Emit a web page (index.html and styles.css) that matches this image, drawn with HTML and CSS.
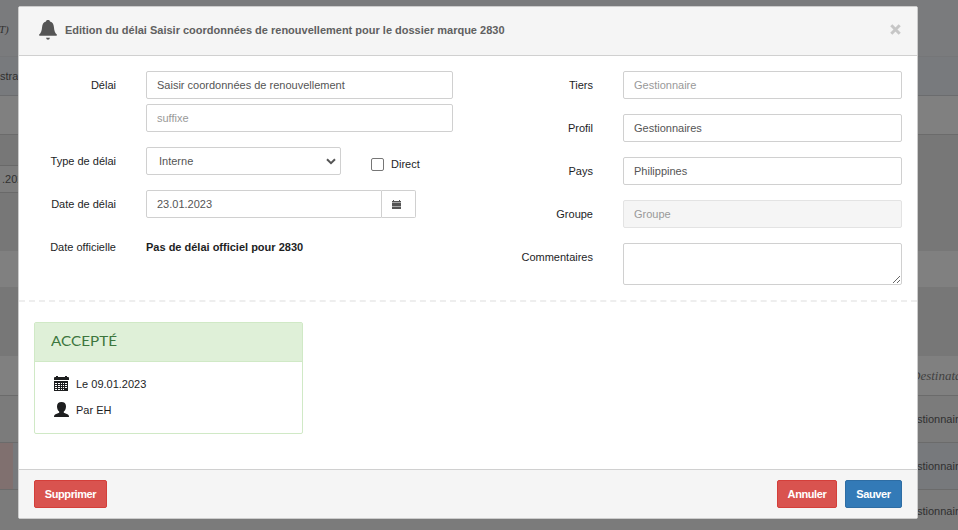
FILE: index.html
```html
<!DOCTYPE html>
<html lang="fr">
<head>
<meta charset="utf-8">
<title>Edition du délai</title>
<link rel="stylesheet" href="styles.css">
</head>
<body>
<div class="page">
  <div class="strip strip-top"><i class="logo-text">OT)</i></div>
  <div class="strip strip-nav"><span>strat</span></div>
  <div class="strip strip-head"></div>
  <div class="strip strip-gap"></div>
  <div class="strip strip-field"><span class="page-date">.2023</span></div>
  <div class="strip strip-space"></div>
  <div class="strip strip-light"></div>
  <div class="strip strip-dark"></div>
  <div class="strip strip-title"><i class="column-name">Destinataire</i></div>
  <div class="strip strip-row"><span class="recipient">stionnaires</span></div>
  <div class="strip strip-row strip-blue"><b class="flag"></b><span class="recipient">stionnaires</span></div>
  <div class="strip strip-row strip-last"><span class="recipient">stionnaires</span></div>
</div>
<div class="overlay">
<form class="modal">
  <header class="modal-header">
    <svg class="bell" viewBox="0 0 18 20"><path d="M9 0c1 0 1.800.5 2 1.400C13.700 2.200 14.700 4.200 14.900 7c.3 4 1 5.800 2.900 7.400.4.500.1 1.300-.6 1.300H.8c-.7 0-1-.8-.6-1.300C2.100 12.800 2.800 11 3.100 7c.2-2.800 1.200-4.800 3.900-5.600C7.200.5 8 0 9 0zM7 17.800h4q-.5 2-2 2t-2-2z"/></svg>
    <h1>Edition du délai Saisir coordonnées de renouvellement pour le dossier marque 2830</h1>
    <svg class="close" viewBox="0 0 11 11"><path d="M1.300 1.300l8.400 8.400M9.700 1.300L1.300 9.700"/></svg>
  </header>
  <div class="modal-body">
    <div class="fields">
      <div class="column column-left">
        <label>Délai</label>
        <div class="stack">
          <input class="control" value="Saisir coordonnées de renouvellement">
          <input class="control" placeholder="suffixe">
        </div>
        <label>Type de délai</label>
        <div class="line">
          <div class="control select">Interne<svg viewBox="0 0 10 7"><path d="M1 1.300l4 3.900 4-3.900"/></svg></div>
          <div class="direct"><span class="box"></span>Direct</div>
        </div>
        <label>Date de délai</label>
        <div class="date-group">
          <input class="control" value="23.01.2023">
          <div class="date-button"><svg viewBox="0 0 9 9"><path d="M0 1h1V0h1v1h5V0h1v1h1v1.500H0zM0 3h9v3H0zM0 6.400h9V9H0z"/></svg></div>
        </div>
        <label>Date officielle</label>
        <div class="official">Pas de délai officiel pour 2830</div>
      </div>
      <div class="column column-right">
        <label>Tiers</label><input class="control" placeholder="Gestionnaire">
        <label>Profil</label><input class="control" value="Gestionnaires">
        <label>Pays</label><input class="control" value="Philippines">
        <label>Groupe</label><input class="control" placeholder="Groupe" disabled>
        <label>Commentaires</label><textarea class="control"></textarea>
      </div>
    </div>
    <hr>
    <section class="status">
      <h2><span>ACCEPTÉ</span></h2>
      <div class="status-body">
        <div class="status-line"><svg viewBox="0 0 15 15"><path fill-rule="evenodd" d="M0 1.500L1 1h1V0h2v1h7V0h2v1h1l1 .5V4H0zM0 5h14v10H0zM1 7v1h2V7zm3 0v1h2V7zm3 0v1h1V7zm2 0v1h1V7zm2 0v1h2V7zM1 9v1h2V9zm3 0v1h2V9zm3 0v1h1V9zm2 0v1h1V9zm2 0v1h2V9zM1 11v1h2v-1zm3 0v1h2v-1zm3 0v1h1v-1zm2 0v1h1v-1zm2 0v1h2v-1zM1 13v1h2v-1zm3 0v1h2v-1zm3 0v1h1v-1zm2 0v1h1v-1z"/></svg>Le 09.01.2023</div>
        <div class="status-line"><svg viewBox="0 0 15 15"><path d="M7.500 0C10.300 0 12 1.500 12 4.300c0 2.400-.9 4.300-2.200 5.300v1.200l3.700 1.500c1 .4 1.500 1.200 1.500 2.700H0c0-1.500.5-2.300 1.500-2.700l3.700-1.500V9.600C3.900 8.600 3 6.700 3 4.300 3 1.500 4.700 0 7.500 0z"/></svg>Par EH</div>
      </div>
    </section>
  </div>
  <footer class="modal-footer">
    <button type="button" class="btn danger delete">Supprimer</button>
    <button type="button" class="btn danger cancel">Annuler</button>
    <button type="button" class="btn primary">Sauver</button>
  </footer>
</form>
</div>
</body>
</html>
```
FILE: styles.css
```css
* { box-sizing: border-box; }
body {
  margin: 0;
  height: 530px;
  overflow: hidden;
  font: 11px/18px "Liberation Sans", Arial, sans-serif;
  color: #1d1e1f;
}
.page { display: flex; flex-direction: column; height: 530px; background: #777; overflow: hidden; }
.strip { display: flex; align-items: center; flex: none; overflow: hidden; white-space: nowrap; color: #303030; }
.strip-top { height: 57px; background: #7a7b7d; border-bottom: 1px solid #757678; }
.strip-nav { height: 39px; background: #787a7d; border-bottom: 1px solid #6b6c6e; }
.strip-head { height: 39px; background: #808080; border-bottom: 1px solid #6b6b6b; }
.strip-gap { height: 30px; }
.strip-field { height: 28px; width: 100px; background: #7d7d7d; border: solid #696969; border-width: 1px 0; }
.strip-space { height: 58px; }
.strip-light { height: 36px; background: #808080; }
.strip-dark { height: 69px; }
.strip-title { height: 40px; background: #808080; border-bottom: 1px solid #6b6b6b; }
.strip-row { height: 47px; background: #7b7b7b; border-bottom: 1px solid #6b6b6b; }
.strip-blue { background: #77797c; }
.strip-last { height: 41px; border: 0; }
.logo-text { font: italic 11px "Liberation Serif", serif; margin-left: -9px; padding-top: 2px; }
.page-date { margin-left: 2px; }
.column-name { margin-left: 911px; font: italic 13px "Liberation Serif", serif; color: #414141; }
.recipient { margin-left: auto; width: 41px; }
.flag { width: 13px; height: 46px; background: #80706f; }

.overlay { position: absolute; left: 0; top: 0; width: 958px; height: 530px; padding: 6px 0 0 18px; }
.modal {
  display: flex;
  flex-direction: column;
  width: 900px;
  height: 513px;
  background: #fff;
  border: 1px solid #ccc;
  border-radius: 2px;
}
.modal-header {
  display: flex;
  align-items: center;
  height: 49px;
  padding: 0 15px 2px 20px;
  background: #f5f5f5;
  border-bottom: 1px solid #d0d0d0;
}
.bell { width: 18px; height: 20px; fill: #555; margin-right: 8px; }
h1 { margin: 0; font-size: 11px; line-height: 18px; font-weight: bold; color: #606060; white-space: nowrap; }
.close { width: 11px; height: 11px; margin: 0 1px 1px auto; fill: none; stroke: #c6c6c6; stroke-width: 3; }
.modal-body { flex: 1; padding-top: 15px; }
.fields { display: flex; justify-content: space-between; padding: 0 15px; height: 229px; }
.column { display: grid; align-content: start; column-gap: 30px; row-gap: 15px; }
.column-left { grid-template-columns: 82px 307px; }
.column-right { grid-template-columns: 90px 279px; }
label { text-align: right; line-height: 28px; height: 28px; white-space: nowrap; }
.control {
  display: block;
  width: 100%;
  height: 28px;
  padding: 0 10px;
  border: 1px solid #d0d0d0;
  border-radius: 2px;
  background: #fff;
  color: #555;
  font: 11px "Liberation Sans", Arial, sans-serif;
}
.control::placeholder { color: #999; }
.control:disabled { background: #f5f5f5; border-color: #e3e3e3; }
textarea.control { height: 42px; resize: vertical; }
.stack { display: grid; row-gap: 5px; }
.line { display: flex; }
.select { display: flex; align-items: center; justify-content: space-between; width: 195px; padding: 0 4px 0 12px; }
.select svg { width: 10px; height: 7px; fill: none; stroke: #555; stroke-width: 2; }
.direct { display: flex; align-items: center; margin-left: 30px; padding-top: 6px; }
.box { width: 13px; height: 13px; margin-right: 7px; border: 1px solid #767676; border-radius: 2px; }
.date-group { display: flex; width: 270px; }
.date-group .control { width: 236px; border-radius: 2px 0 0 2px; }
.date-button { flex: 1; display: flex; align-items: center; padding-left: 10px; border: 1px solid #d0d0d0; border-left: 0; border-radius: 0 2px 2px 0; }
.date-button svg { width: 9px; height: 9px; fill: #555; }
.official { font-weight: bold; line-height: 28px; }
hr { margin: 0 0 20px; border: 0; border-top: 2px dashed #eee; }
.status { width: 269px; height: 112px; margin-left: 15px; border: 1px solid #d0e9c6; border-radius: 2px; }
h2 {
  height: 39px;
  margin: 0;
  padding-left: 16px;
  background: #dff0d8;
  border-bottom: 1px solid #d0e9c6;
  color: #3c763d;
  font: 400 12.5px/37px Lato, sans-serif;
}
h2 span { display: inline-block; transform: scaleX(1.22); transform-origin: left; }
.status-body { padding: 9px 19px; }
.status-line { display: flex; align-items: center; height: 26px; }
.status-line svg { width: 15px; height: 15px; margin: 0 7px 2px 0; fill: #1d1e1f; }
.modal-footer {
  display: flex;
  height: 49px;
  padding: 10px 15px 0;
  background: #f5f5f5;
  border-top: 1px solid #d0d0d0;
}
.btn { height: 28px; padding: 0; border: 1px solid; border-radius: 2px; color: #fff; font: bold 11px "Liberation Sans", Arial, sans-serif; letter-spacing: -0.4px; }
.danger { background: #d9534f; border-color: #d43f3a; }
.primary { width: 57px; background: #337ab7; border-color: #2e6da4; }
.delete { width: 73px; }
.cancel { width: 60px; margin: 0 8px 0 auto; }
```
